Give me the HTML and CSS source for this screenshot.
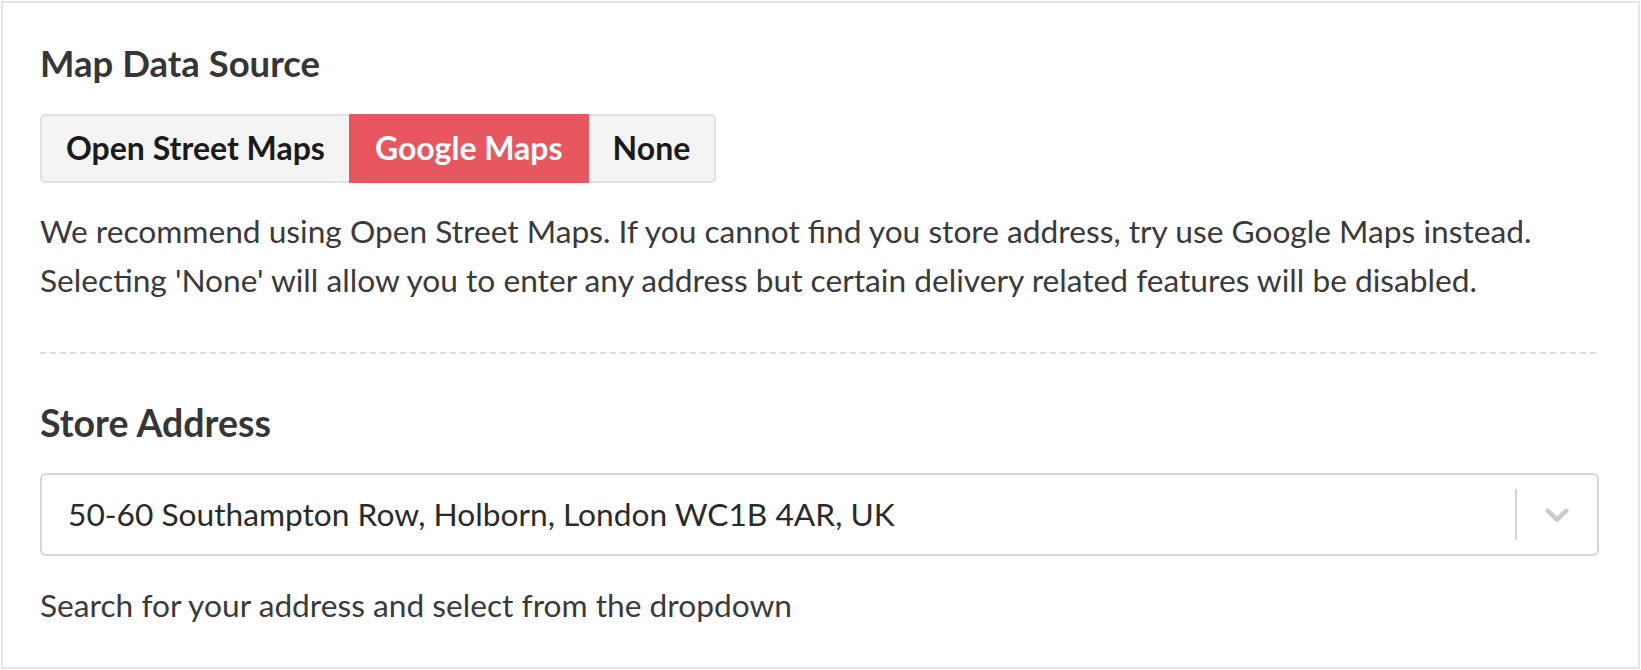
FILE: index.html
```html
<!DOCTYPE html>
<html lang="en">
<head>
<meta charset="utf-8">
<title>Store settings</title>
<link rel="stylesheet" href="styles.css">
</head>
<body>
<div class="card">
  <section class="field">
    <h2 class="label">Map Data Source</h2>
    <div class="seg">
      <button class="seg-btn" type="button">Open Street Maps</button>
      <button class="seg-btn is-active" type="button">Google Maps</button>
      <button class="seg-btn" type="button">None</button>
    </div>
    <p class="help">We recommend using Open Street Maps. If you cannot find you store address, try use Google Maps instead. Selecting 'None' will allow you to enter any address but certain delivery related features will be disabled.</p>
  </section>
  <div class="divider"></div>
  <section class="field">
    <h2 class="label label-second">Store Address</h2>
    <div class="select">
      <div class="select-value">50-60 Southampton Row, Holborn, London WC1B 4AR, UK</div>
      <div class="select-indicators">
        <span class="select-sep"></span>
        <span class="select-chev">
          <svg viewBox="0 0 20 20" width="40" height="40" aria-hidden="true"><path d="M4.516 7.548c0.436-0.446 1.043-0.481 1.576 0l3.908 3.747 3.908-3.747c0.533-0.481 1.141-0.446 1.574 0 0.436 0.445 0.408 1.197 0 1.615-0.406 0.418-4.695 4.502-4.695 4.502-0.217 0.223-0.502 0.335-0.787 0.335s-0.57-0.112-0.789-0.335c0 0-4.287-4.084-4.695-4.502s-0.436-1.170 0-1.615z"/></svg>
        </span>
      </div>
    </div>
    <p class="help help-last">Search for your address and select from the dropdown</p>
  </section>
</div>
</body>
</html>
```
FILE: styles.css
```css
* { box-sizing: border-box; }
html, body { margin: 0; padding: 0; background: #ffffff; }
body { padding: 1px; font-family: Lato, "Open Sans", sans-serif; }

.card {
  height: 668px;
  border: 2px solid #e6e6e6;
  padding: 39px 39px 0 37px;
  background: #fff;
}

.label {
  margin: 0;
  font-size: 36.5px;
  line-height: 1.2;
  font-weight: 700;
  color: #363636;
}

.seg {
  display: flex;
  margin-top: 28px;
}
.seg-btn {
  height: 69px;
  margin: 0;
  padding: 0 24px;
  border: 2px solid #e2e2e2;
  background: #f4f4f4;
  font-family: Lato, "Open Sans", sans-serif;
  font-size: 32px;
  font-weight: 700;
  color: #1b1b1b;
  line-height: 1.2;
  border-radius: 0;
}
.seg-btn + .seg-btn { margin-left: -2px; }
.seg-btn:first-child { border-radius: 5px 0 0 5px; }
.seg-btn:last-child { border-radius: 0 5px 5px 0; }
.seg-btn.is-active {
  background: #e8575f;
  border-color: #e8575f;
  color: #ffffff;
  position: relative;
}

.help {
  margin: 24px 0 0;
  font-size: 31.7px;
  line-height: 49px;
  color: #3a3a3a;
}

.divider {
  height: 2px;
  margin-top: 47px;
  background: repeating-linear-gradient(90deg, #dcdcdc 0 6px, transparent 6px 10px);
}

.label-second { margin-top: 46px; font-size: 37.5px; }

.select {
  display: flex;
  align-items: center;
  height: 83px;
  margin-top: 28px;
  border: 2px solid #d6d6d6;
  border-radius: 6px;
  background: #fff;
}
.select-value {
  flex: 1;
  padding-left: 26px;
  font-size: 31.7px;
  color: #2a2a2a;
  white-space: nowrap;
}
.select-indicators {
  display: flex;
  align-self: stretch;
  align-items: center;
}
.select-sep {
  align-self: stretch;
  width: 2px;
  margin: 14px 0;
  background: #d4d4d4;
}
.select-chev {
  display: flex;
  padding: 0 20px;
  fill: #cccccc;
}

.help-last { margin-top: 25px; }
```
